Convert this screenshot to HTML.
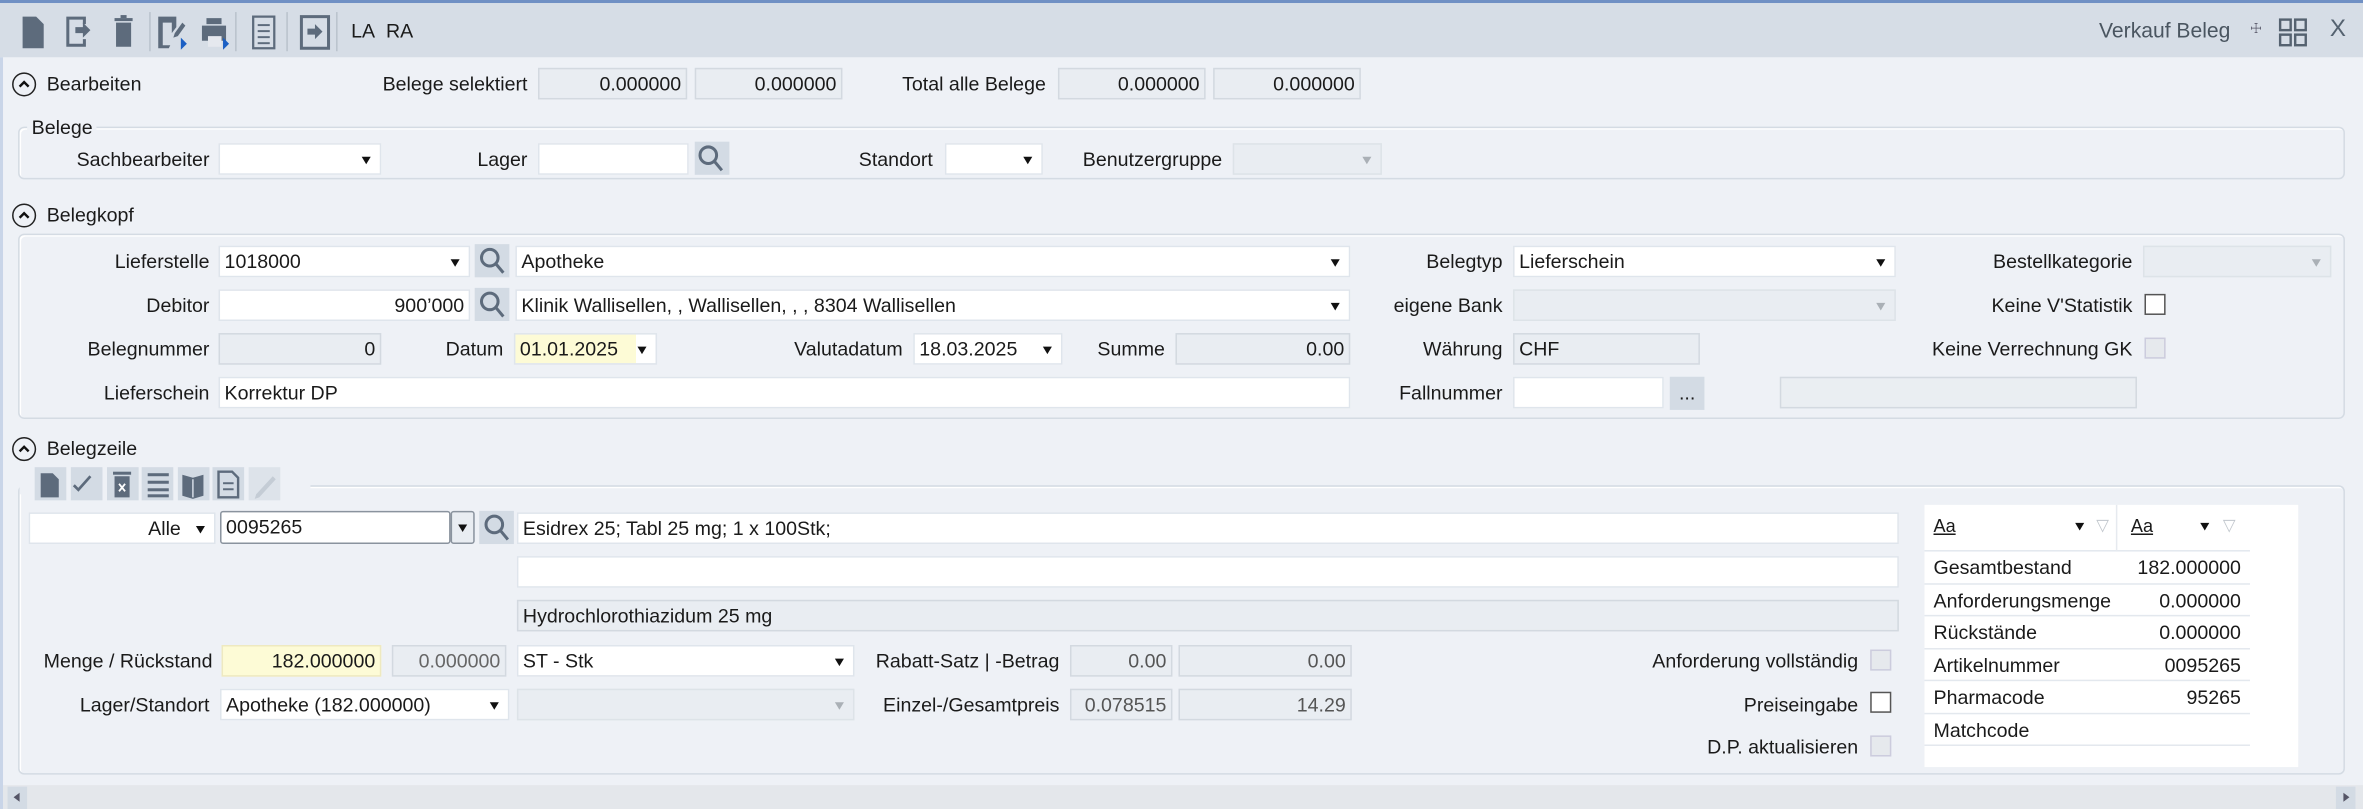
<!DOCTYPE html>
<html><head><meta charset="utf-8">
<style>
html,body{margin:0;padding:0;width:2363px;height:809px;overflow:hidden;background:#eef1f6;}
#w{position:absolute;left:0;top:0;width:1568px;height:537px;transform:scale(1.50702);transform-origin:0 0;font-family:"Liberation Sans",sans-serif;font-size:13px;color:#1a1a1a;background:#eef1f6;}
#w div{position:absolute;box-sizing:border-box;}
.tb{left:0;top:0;width:1568px;height:38px;background:#d6dde6;border-top:2px solid #7090c4;}
.lb{width:200px;text-align:right;white-space:nowrap;line-height:21px;height:21px;}
.in{background:#fff;border:1px solid #dfe5ec;height:21px;line-height:19px;padding:0 3px;white-space:nowrap;overflow:hidden;}
.ro{background:#e9edf2;border:1px solid #d3d9e0;height:21px;line-height:19px;padding:0 3px;white-space:nowrap;overflow:hidden;}
.r{text-align:right;}
.dis{background:#e9edf2;border:1px solid #dde3e8;height:21px;}
.ar{position:absolute;right:6px;top:8px;width:0;height:0;border-left:3.5px solid transparent;border-right:3.5px solid transparent;border-top:5px solid #111;}
.dis .ar,.ard{border-top-color:#aab0b6 !important;}
.sb{background:#d3dbe4;width:23px;height:22px;}
.fs{border:1px solid #d4dbe3;border-radius:4px;box-shadow:inset 1px 1px 0 #fff;}
.hd{height:18px;line-height:18px;}
.cir{width:16px;height:16px;border:1.3px solid #222;border-radius:50%;}
.cb{width:14px;height:14px;border:1px solid #555;background:#fff;}
.cbd{width:14px;height:14px;border:1px solid #ccd;background:#e6e9ed;}
.ib{background:#d3dbe4;width:21px;height:22px;}
.gr{border-bottom:1px solid #e3e8ee;height:21.5px;line-height:21px;}
</style></head><body>
<div id="w">
<div class="tb"></div>
<!-- toolbar icons -->
<svg style="position:absolute;left:0;top:0" width="300" height="38">
<g fill="#5d6b7c">
<path d="M15 11h9l5 5v16h-14z"/>
<path d="M44 11h13v5h-2v-3h-9v16h9v-3h2v5h-13z"/><path d="M50 18h5v-3l5 5-5 5v-3h-5z"/>
<rect x="76" y="12" width="12" height="2"/><rect x="80" y="10" width="4" height="2"/><path d="M77 15h10v16h-10z"/>
<path d="M105 11h12v7l-3 4v-7h-6v15h5l-1 2h-7z"/><path d="M116 22l5-7 2 2-5 7-3 1z"/>
<path d="M137 12h10v4h-10z"/><path d="M134 17h16v10h-16z"/><path d="M138 24h9v7h-9z" fill="#e5e8ee"/>
<path d="M168 11h14v21h-14z" fill="none" stroke="#5d6b7c" stroke-width="1.5"/><rect x="171" y="16" width="8" height="1.3"/><rect x="171" y="20" width="8" height="1.3"/><rect x="171" y="24" width="8" height="1.3"/><rect x="171" y="28" width="8" height="1.3"/>
<path d="M200 11h18v21h-18z" fill="none" stroke="#5d6b7c" stroke-width="2"/><path d="M204 19h5v-3l5 5-5 5v-3h-5z"/>
</g>
<g fill="#1b5fc4"><path d="M120 25l4 4-4 4z"/><path d="M148 25l4 4-4 4z"/></g>
<g fill="#b9c2cc"><rect x="99" y="8" width="1" height="26"/><rect x="156" y="8" width="1" height="26"/><rect x="190" y="8" width="1" height="26"/><rect x="223" y="8" width="1" height="26"/></g>
</svg>
<div style="left:233px;top:13px;">LA&nbsp; RA</div>
<div style="left:1300px;top:12px;width:180px;text-align:right;font-size:14px;color:#4a5560;">Verkauf Beleg</div>
<div style="left:1493px;top:14px;font-size:9px;color:#556;">&#x2629;</div>
<svg style="position:absolute;left:1512px;top:12px" width="20" height="20"><g fill="none" stroke="#556270" stroke-width="1.6"><rect x="1" y="1" width="7" height="7"/><rect x="11" y="1" width="7" height="7"/><rect x="1" y="11" width="7" height="7"/><rect x="11" y="11" width="7" height="7"/></g></svg>
<div style="left:1546px;top:11px;font-size:16px;color:#556270;">X</div>

<!-- left frame line -->
<div style="left:0;top:38px;width:2px;height:499px;background:#c9d5e8;"></div>

<!-- Bearbeiten -->
<div class="cir" style="left:8px;top:48px;"></div><svg style="position:absolute;left:8px;top:48px" width="16" height="16"><path d="M5 9.5l3-3 3 3" fill="none" stroke="#111" stroke-width="1.6"/></svg>
<div class="hd" style="left:31px;top:47px;">Bearbeiten</div>
<div class="lb" style="left:150px;top:45px;">Belege selektiert</div>
<div class="ro r" style="left:357px;top:45px;width:99px;">0.000000</div>
<div class="ro r" style="left:461px;top:45px;width:98px;">0.000000</div>
<div class="lb" style="left:494px;top:45px;">Total alle Belege</div>
<div class="ro r" style="left:702px;top:45px;width:98px;">0.000000</div>
<div class="ro r" style="left:805px;top:45px;width:98px;">0.000000</div>

<div class="fs" style="left:12px;top:84px;width:1544px;height:35px;"></div>
<div style="left:18px;top:77px;background:#eef1f6;padding:0 3px;line-height:15px;">Belege</div>
<div class="lb" style="left:-61px;top:95px;">Sachbearbeiter</div>
<div class="in" style="left:145px;top:95px;width:108px;"><span class="ar"></span></div>
<div class="lb" style="left:150px;top:95px;">Lager</div>
<div class="in" style="left:357px;top:95px;width:100px;"></div>
<div class="sb" style="left:461px;top:94px;"></div>
<div class="lb" style="left:419px;top:95px;">Standort</div>
<div class="in" style="left:627px;top:95px;width:65px;"><span class="ar"></span></div>
<div class="lb" style="left:611px;top:95px;">Benutzergruppe</div>
<div class="dis" style="left:818px;top:95px;width:99px;"><span class="ar ard"></span></div>

<!-- Belegkopf -->
<div class="cir" style="left:8px;top:135px;"></div><svg style="position:absolute;left:8px;top:135px" width="16" height="16"><path d="M5 9.5l3-3 3 3" fill="none" stroke="#111" stroke-width="1.6"/></svg>
<div class="hd" style="left:31px;top:134px;">Belegkopf</div>
<div class="fs" style="left:12px;top:155px;width:1544px;height:123px;"></div>

<div class="lb" style="left:-61px;top:163px;">Lieferstelle</div>
<div class="in" style="left:145px;top:163px;width:167px;">1018000<span class="ar"></span></div>
<div class="sb" style="left:315px;top:162px;"></div>
<div class="in" style="left:342px;top:163px;width:554px;">Apotheke<span class="ar"></span></div>
<div class="lb" style="left:797px;top:163px;">Belegtyp</div>
<div class="in" style="left:1004px;top:163px;width:254px;">Lieferschein<span class="ar"></span></div>
<div class="lb" style="left:1215px;top:163px;">Bestellkategorie</div>
<div class="dis" style="left:1422px;top:163px;width:125px;"><span class="ar ard"></span></div>

<div class="lb" style="left:-61px;top:192px;">Debitor</div>
<div class="in r" style="left:145px;top:192px;width:167px;">900’000</div>
<div class="sb" style="left:315px;top:191px;"></div>
<div class="in" style="left:342px;top:192px;width:554px;">Klinik Wallisellen, , Wallisellen, , , 8304 Wallisellen<span class="ar"></span></div>
<div class="lb" style="left:797px;top:192px;">eigene Bank</div>
<div class="dis" style="left:1004px;top:192px;width:254px;"><span class="ar ard"></span></div>
<div class="lb" style="left:1215px;top:192px;">Keine V'Statistik</div>
<div class="cb" style="left:1423px;top:195px;"></div>

<div class="lb" style="left:-61px;top:221px;">Belegnummer</div>
<div class="ro r" style="left:145px;top:221px;width:108px;">0</div>
<div class="lb" style="left:134px;top:221px;">Datum</div>
<div class="in" style="left:341px;top:221px;width:95px;background:linear-gradient(90deg,#fdfbd6 0,#fdfbd6 80px,#fff 80px);">01.01.2025<span class="ar"></span></div>
<div class="lb" style="left:399px;top:221px;">Valutadatum</div>
<div class="in" style="left:606px;top:221px;width:99px;">18.03.2025<span class="ar"></span></div>
<div class="lb" style="left:573px;top:221px;">Summe</div>
<div class="ro r" style="left:780px;top:221px;width:116px;">0.00</div>
<div class="lb" style="left:797px;top:221px;">Währung</div>
<div class="ro" style="left:1004px;top:221px;width:124px;">CHF</div>
<div class="lb" style="left:1215px;top:221px;">Keine Verrechnung GK</div>
<div class="cbd" style="left:1423px;top:224px;"></div>

<div class="lb" style="left:-61px;top:250px;">Lieferschein</div>
<div class="in" style="left:145px;top:250px;width:751px;">Korrektur DP</div>
<div class="lb" style="left:797px;top:250px;">Fallnummer</div>
<div class="in" style="left:1004px;top:250px;width:100px;"></div>
<div class="sb" style="left:1108px;top:250px;text-align:center;line-height:22px;">...</div>
<div class="ro" style="left:1181px;top:250px;width:237px;background:#eaeef2;"></div>

<!-- search icons -->
<svg style="position:absolute;left:0;top:0" width="500" height="370"><g fill="none" stroke="#5d6b7c" stroke-width="2"><circle cx="470" cy="103" r="5.5"/><path d="M474 107l5 6"/><circle cx="325" cy="171" r="5.5"/><path d="M329 175l5 6"/><circle cx="325" cy="200" r="5.5"/><path d="M329 204l5 6"/><circle cx="328" cy="348" r="5.5"/><path d="M332 352l5 6"/></g></svg>

<!-- Belegzeile -->
<div class="cir" style="left:8px;top:290px;"></div><svg style="position:absolute;left:8px;top:290px" width="16" height="16"><path d="M5 9.5l3-3 3 3" fill="none" stroke="#111" stroke-width="1.6"/></svg>
<div class="hd" style="left:31px;top:289px;">Belegzeile</div>
<div class="fs" style="left:12px;top:322px;width:1544px;height:192px;"></div>
<div style="left:13px;top:316px;width:193px;height:12px;background:#eef1f6;"></div>
<div class="ib" style="left:23px;top:310px;"></div><div class="ib" style="left:47px;top:310px;"></div><div class="ib" style="left:71px;top:310px;"></div><div class="ib" style="left:94px;top:310px;"></div><div class="ib" style="left:118px;top:310px;"></div><div class="ib" style="left:141px;top:310px;"></div><div class="ib" style="left:165px;top:310px;background:#dde3ea;"></div>
<svg style="position:absolute;left:0;top:300px" width="200" height="40"><g fill="#5d6b7c">
<path d="M27 14h8l4 4v12h-12z"/>
<path d="M49 22l3 3 8-9" fill="none" stroke="#5d6b7c" stroke-width="1.8"/>
<rect x="75" y="13" width="12" height="2"/><path d="M76 16h10v14h-10z"/>
<rect x="98" y="14" width="14" height="2"/><rect x="98" y="19" width="14" height="2"/><rect x="98" y="24" width="14" height="2"/><rect x="98" y="28" width="14" height="2"/>
<path d="M121 15l7 2 7-2v14l-7 2-7-2z"/>
<path d="M145 13h9l4 4v13h-13z" fill="none" stroke="#5d6b7c" stroke-width="1.6"/><rect x="148" y="20" width="7" height="1.3"/><rect x="148" y="24" width="7" height="1.3"/>
<path d="M170 28l11-12 2 2-11 12-3 1z" fill="#c4ccd5"/>
</g><g fill="#fff"><path d="M79 21l4 5M83 21l-4 5" stroke="#fff" stroke-width="1.2"/><path d="M128 18v12" stroke="#d3dbe4" stroke-width="1"/></g></svg>

<div class="in r" style="left:19px;top:340px;width:124px;padding-right:22px;">Alle<span class="ar"></span></div>
<div class="in" style="left:146px;top:339px;width:153px;height:22px;border:1px solid #8a939e;border-radius:2px;">0095265</div>
<div style="left:299px;top:339px;width:16px;height:22px;border:1px solid #8a939e;background:#e9edf2;border-radius:2px;"><span class="ar" style="right:4px;top:8px;"></span></div>
<div class="sb" style="left:318px;top:339px;"></div>
<svg style="position:absolute;left:318px;top:339px" width="23" height="22"><g fill="none" stroke="#5d6b7c" stroke-width="2"><circle cx="10" cy="9" r="5.5"/><path d="M14 13l5 6"/></g></svg>
<div class="in" style="left:343px;top:340px;width:917px;">Esidrex 25; Tabl 25 mg; 1 x 100Stk;</div>
<div class="in" style="left:343px;top:369px;width:917px;"></div>
<div class="ro" style="left:343px;top:398px;width:917px;">Hydrochlorothiazidum 25 mg</div>

<div class="lb" style="left:-59px;top:428px;">Menge / Rückstand</div>
<div class="in r" style="left:147px;top:428px;width:106px;background:#fdfbd6;border-color:#eee9c0;">182.000000</div>
<div class="ro r" style="left:260px;top:428px;width:76px;color:#666;">0.000000</div>
<div class="in" style="left:343px;top:428px;width:224px;">ST - Stk<span class="ar"></span></div>
<div class="lb" style="left:503px;top:428px;">Rabatt-Satz | -Betrag</div>
<div class="ro r" style="left:710px;top:428px;width:68px;color:#555;">0.00</div>
<div class="ro r" style="left:782px;top:428px;width:115px;color:#555;">0.00</div>
<div class="lb" style="left:1033px;top:428px;">Anforderung vollständig</div>
<div class="cbd" style="left:1241px;top:431px;"></div>

<div class="lb" style="left:-61px;top:457px;">Lager/Standort</div>
<div class="in" style="left:146px;top:457px;width:192px;">Apotheke (182.000000)<span class="ar"></span></div>
<div class="dis" style="left:343px;top:457px;width:224px;"><span class="ar ard"></span></div>
<div class="lb" style="left:503px;top:457px;">Einzel-/Gesamtpreis</div>
<div class="ro r" style="left:710px;top:457px;width:68px;color:#555;">0.078515</div>
<div class="ro r" style="left:782px;top:457px;width:115px;color:#555;">14.29</div>
<div class="lb" style="left:1033px;top:457px;">Preiseingabe</div>
<div class="cb" style="left:1241px;top:459px;"></div>
<div class="lb" style="left:1033px;top:485px;">D.P. aktualisieren</div>
<div class="cbd" style="left:1241px;top:488px;"></div>

<!-- grid -->
<div style="left:1277px;top:335px;width:248px;height:174px;background:#fff;"></div>
<div style="left:1277px;top:335px;width:216px;height:31px;border-bottom:1px solid #e3e8ee;"></div>
<div style="left:1404px;top:335px;width:1px;height:31px;background:#e6eaef;"></div>
<div style="left:1283px;top:342px;text-decoration:underline;font-size:12px;">Aa</div>
<div style="left:1414px;top:342px;text-decoration:underline;font-size:12px;">Aa</div>
<span class="ar" style="position:absolute;left:1377px;top:347px;"></span>
<span class="ar" style="position:absolute;left:1460px;top:347px;"></span>
<div style="left:1391px;top:342px;color:#c0c6cc;font-size:11px;">&#x25BD;</div>
<div style="left:1475px;top:342px;color:#c0c6cc;font-size:11px;">&#x25BD;</div>
<div class="gr" style="left:1277px;top:366px;width:216px;padding:0 6px;">Gesamtbestand<span style="float:right">182.000000</span></div>
<div class="gr" style="left:1277px;top:387.5px;width:216px;padding:0 6px;">Anforderungsmenge<span style="float:right">0.000000</span></div>
<div class="gr" style="left:1277px;top:409px;width:216px;padding:0 6px;">Rückstände<span style="float:right">0.000000</span></div>
<div class="gr" style="left:1277px;top:430.5px;width:216px;padding:0 6px;">Artikelnummer<span style="float:right">0095265</span></div>
<div class="gr" style="left:1277px;top:452px;width:216px;padding:0 6px;">Pharmacode<span style="float:right">95265</span></div>
<div class="gr" style="left:1277px;top:473.5px;width:216px;padding:0 6px;">Matchcode</div>

<!-- scrollbar -->
<div style="left:2px;top:521px;width:1566px;height:16px;background:#e4e7eb;"></div>
<div style="left:5px;top:522px;width:13px;height:15px;background:#d3dbe4;"></div>
<div style="left:1550px;top:522px;width:13px;height:15px;background:#d3dbe4;"></div>
<svg style="position:absolute;left:0;top:521px" width="1568" height="16"><path d="M13 5l-4 3 4 3z" fill="#556"/><path d="M1555 5l4 3-4 3z" fill="#556"/></svg>
</div>
</body></html>
